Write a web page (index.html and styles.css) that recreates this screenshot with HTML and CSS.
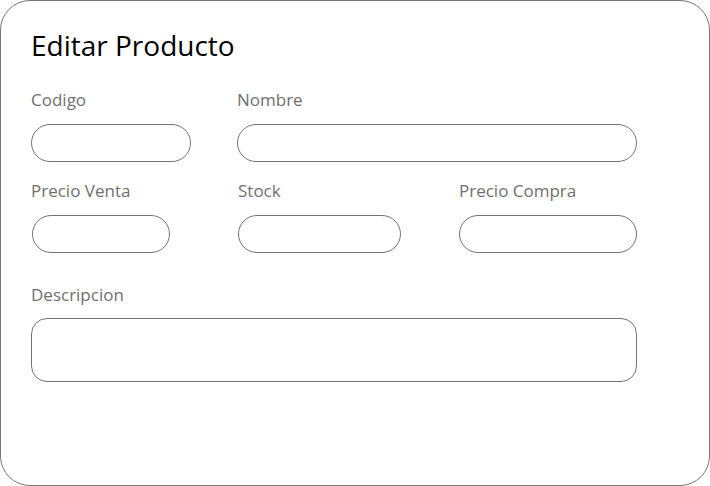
FILE: index.html
```html
<!DOCTYPE html>
<html lang="es">
<head>
<meta charset="utf-8">
<title>Editar Producto</title>
<link rel="stylesheet" href="styles.css">
</head>
<body>
<div class="card">
  <h1 class="title">Editar Producto</h1>
  <div class="row row-1">
    <div class="field">
      <label class="label">Codigo</label>
      <input class="input w-codigo" type="text">
    </div>
    <div class="field">
      <label class="label">Nombre</label>
      <input class="input w-nombre" type="text">
    </div>
  </div>
  <div class="row row-2">
    <div class="field">
      <label class="label">Precio Venta</label>
      <input class="input w-venta" type="text">
    </div>
    <div class="field">
      <label class="label">Stock</label>
      <input class="input w-stock" type="text">
    </div>
    <div class="field">
      <label class="label">Precio Compra</label>
      <input class="input w-compra" type="text">
    </div>
  </div>
  <div class="row row-3">
    <div class="field">
      <label class="label">Descripcion</label>
      <textarea class="textarea"></textarea>
    </div>
  </div>
</div>
</body>
</html>
```

FILE: styles.css
```css
* { box-sizing: border-box; }
html, body { margin: 0; padding: 0; background: #fff; }
body { font-family: "Open Sans", "Noto Sans", sans-serif; }

.card {
  width: 710px;
  height: 486px;
  border: 1px solid #777;
  border-radius: 30px;
  padding: 26px 0 0 30px;
  background: #fff;
}

.title {
  margin: 0;
  font-size: 28px;
  line-height: 36px;
  font-weight: 400;
  color: #000;
}

.row { display: grid; }
.row-1 { grid-template-columns: 206px 400px; margin-top: 27px; }
.row-2 { grid-template-columns: 207px 221px 178px; margin-top: 19px; }
.row-3 { grid-template-columns: 606px; margin-top: 32px; }

.field { display: flex; flex-direction: column; align-items: flex-start; }

.label {
  font-size: 17px;
  line-height: 20px;
  color: #707070;
}

.input {
  margin-top: 14px;
  height: 38px;
  border: 1px solid #747474;
  border-radius: 19px;
  background: #fff;
  outline: none;
  font: inherit;
}

.w-codigo { width: 160px; }
.w-nombre { width: 400px; }
.w-venta { width: 138px; margin-left: 1px; }
.w-stock { width: 163px; }
.w-compra { width: 178px; }

.textarea {
  margin-top: 13px;
  width: 606px;
  height: 64px;
  border: 1px solid #747474;
  border-radius: 16px;
  resize: none;
  outline: none;
  background: #fff;
  font: inherit;
}
```
